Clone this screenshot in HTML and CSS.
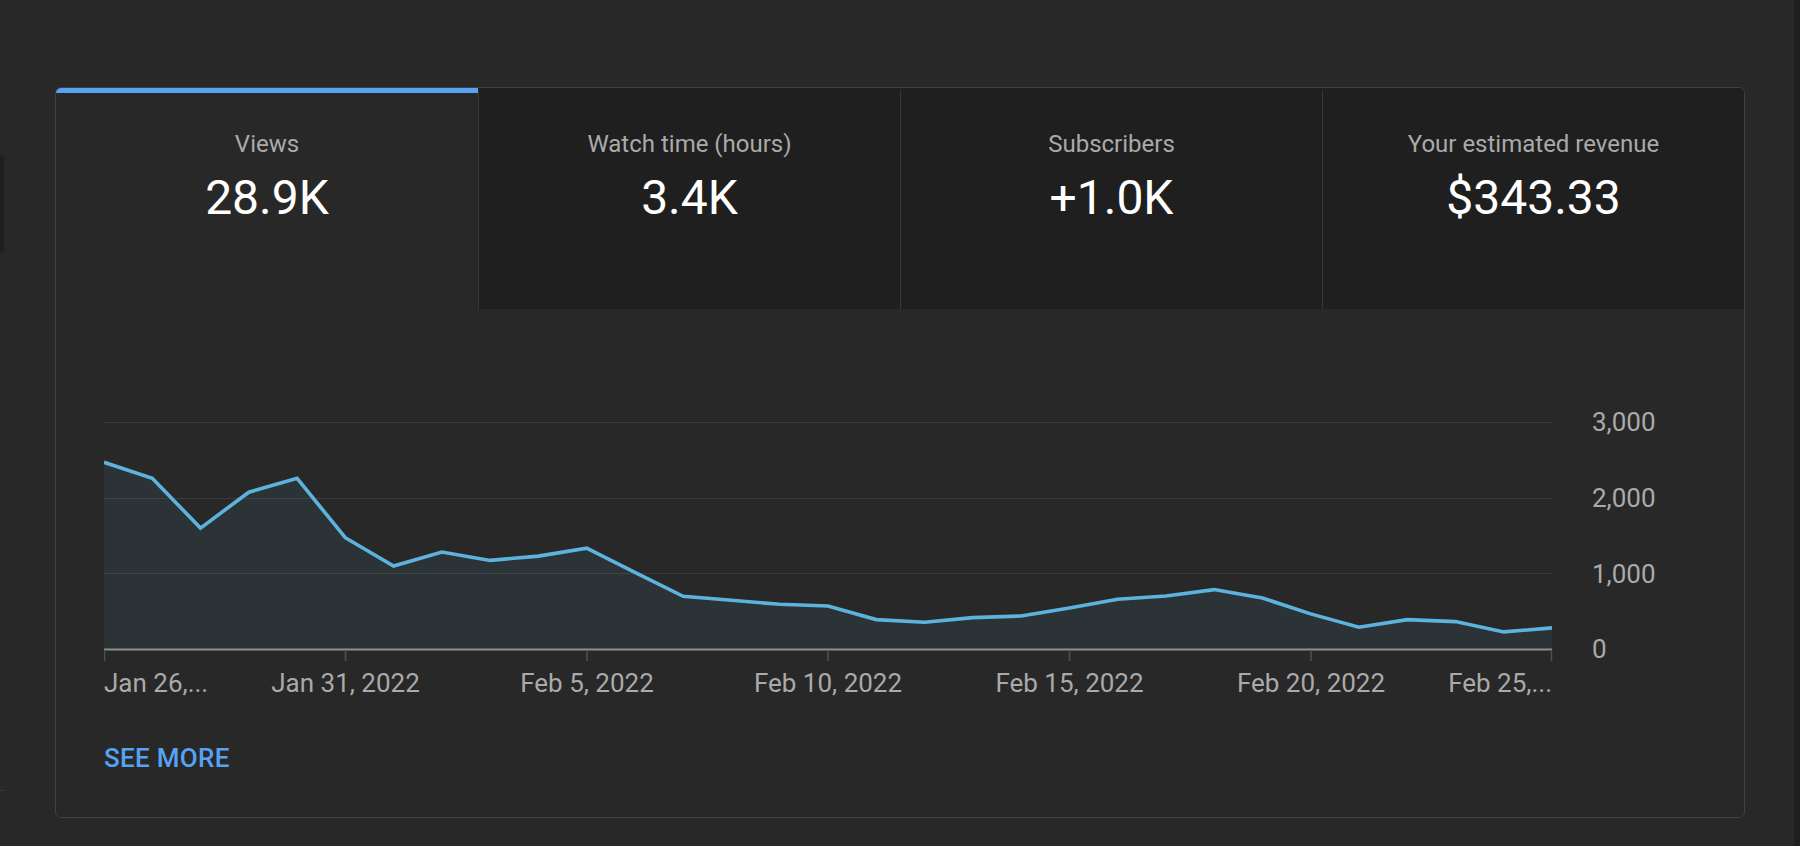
FILE: index.html
```html
<!DOCTYPE html>
<html lang="en">
<head>
    <meta charset="UTF-8">
    <meta name="viewport" content="width=device-width, initial-scale=1.0">
    <title>Channel analytics - Overview</title>
    <link rel="stylesheet" href="styles.css">
</head>
<body>
    <div class="page">
        <div class="side-edge">
            <div class="side-stub"></div>
            <div class="side-rule"></div>
        </div>

        <section class="overview-card">
            <div class="metric-tabs">
                <div class="metric-tab active">
                    <div class="metric-label">Views</div>
                    <div class="metric-value">28.9K</div>
                </div>
                <div class="metric-tab">
                    <div class="metric-label">Watch time (hours)</div>
                    <div class="metric-value">3.4K</div>
                </div>
                <div class="metric-tab">
                    <div class="metric-label">Subscribers</div>
                    <div class="metric-value">+1.0K</div>
                </div>
                <div class="metric-tab">
                    <div class="metric-label">Your estimated revenue</div>
                    <div class="metric-value">$343.33</div>
                </div>
            </div>

            <div class="chart-area">
                <svg class="chart" width="1596" height="310" viewBox="0 0 1596 310">
                    <!-- grid -->
                    <g class="grid-lines">
                        <line x1="0" y1="22.5" x2="1448" y2="22.5"></line>
                        <line x1="0" y1="98.5" x2="1448" y2="98.5"></line>
                        <line x1="0" y1="173.5" x2="1448" y2="173.5"></line>
                    </g>

                    <polygon id="area" class="area"></polygon>

                    <line class="baseline" x1="0" y1="249.5" x2="1448" y2="249.5"></line>
                    <g class="ticks">
                        <line x1="0.5" y1="250" x2="0.5" y2="261"></line>
                        <line x1="241.5" y1="250" x2="241.5" y2="261"></line>
                        <line x1="483" y1="250" x2="483" y2="261"></line>
                        <line x1="724" y1="250" x2="724" y2="261"></line>
                        <line x1="965.5" y1="250" x2="965.5" y2="261"></line>
                        <line x1="1207" y1="250" x2="1207" y2="261"></line>
                        <line x1="1447.5" y1="250" x2="1447.5" y2="261"></line>
                    </g>

                    <polyline id="line" class="line"></polyline>

                    <!-- y axis -->
                    <g class="axis-label">
                        <text x="1488" y="31">3,000</text>
                        <text x="1488" y="107">2,000</text>
                        <text x="1488" y="182.5">1,000</text>
                        <text x="1488" y="258">0</text>
                    </g>

                    <!-- x axis -->
                    <g class="axis-label">
                        <text x="0" y="292">Jan 26,...</text>
                        <text x="241.5" y="292" text-anchor="middle">Jan 31, 2022</text>
                        <text x="483" y="292" text-anchor="middle">Feb 5, 2022</text>
                        <text x="724" y="292" text-anchor="middle">Feb 10, 2022</text>
                        <text x="965.5" y="292" text-anchor="middle">Feb 15, 2022</text>
                        <text x="1207" y="292" text-anchor="middle">Feb 20, 2022</text>
                        <text x="1448" y="292" text-anchor="end">Feb 25,...</text>
                    </g>
                </svg>

                <a class="see-more" href="#">SEE MORE</a>
            </div>
        </section>

        <div class="scroll-edge"></div>
    </div>

    <script>
        // Daily views, Jan 26 - Feb 25
        const views = [
            2474, 2263, 1604, 2079, 2263, 1477, 1103, 1287, 1178, 1234,
            1340, 1020, 703, 650, 597, 575, 395, 360, 422, 443,
            549, 663, 707, 791, 680, 470, 295, 395, 369, 232, 285
        ];

        const plotWidth = 1448;
        const baseY = 249.5;
        const topY = 22.5; // 3,000 line
        const maxValue = 3000;
        const step = plotWidth / (views.length - 1);

        const points = views.map((v, i) => {
            const x = (i * step).toFixed(1);
            const y = (baseY - v / maxValue * (baseY - topY)).toFixed(1);
            return x + ',' + y;
        }).join(' ');

        document.getElementById('line').setAttribute('points', points);
        document.getElementById('area').setAttribute('points', `0,${baseY} ${points} ${plotWidth},${baseY}`);
    </script>
</body>
</html>
```

FILE: styles.css
```css
body {
    margin: 0;
    background: #282828;
    font-family: Roboto, "Noto Sans", Arial, sans-serif;
    color: #fff;
    overflow: hidden;
}

.page {
    display: grid;
    grid-template-columns: 4px 51px 1690px 49px 6px;
    height: 846px;
}

/* bits of the neighbouring panels */
.side-edge {
    grid-column: 1;
}

.side-stub {
    margin-top: 156px;
    height: 96px;
    background: #1f1f1f;
}

.side-rule {
    margin-top: 538px;
    height: 1px;
    background: #3a3a3a;
}

.scroll-edge {
    grid-column: 5;
    background: #1f1f1f;
}

.overview-card {
    grid-column: 3;
    align-self: start;
    margin-top: 87px;
    border: 1px solid #3f3f3f;
    border-radius: 6px;
    overflow: hidden;
    background: #282828;
}

.metric-tabs {
    display: grid;
    grid-template-columns: repeat(4, 1fr);
}

.metric-tab {
    height: 221px;
    box-sizing: border-box;
    padding-top: 37px;
    border-top: 5px solid transparent;
    border-left: 1px solid #383838;
    background: #1f1f1f;
    text-align: center;
}

.metric-tab.active {
    background: #282828;
    border-left: none;
    border-top-color: #56a3f3;
}

.metric-label {
    font-size: 24px;
    line-height: 28px;
    color: #aaaaaa;
}

.metric-value {
    margin-top: 12px;
    font-size: 48px;
    line-height: 56px;
    color: #ffffff;
}

.chart-area {
    padding: 91px 0 44px 48px;
}

.chart {
    display: block;
}

.grid-lines line {
    stroke: #3a3a3a;
    stroke-width: 1;
}

.area {
    fill: #5cb3dd;
    fill-opacity: 0.085;
}

.baseline {
    stroke: #8e8e8e;
    stroke-width: 2;
}

.ticks line {
    stroke: #505050;
    stroke-width: 1.5;
}

.line {
    fill: none;
    stroke: #5cb3dd;
    stroke-width: 3.6;
}

.axis-label text {
    fill: #aaaaaa;
    font-family: Roboto, "Noto Sans", Arial, sans-serif;
    font-size: 26px;
}

.see-more {
    display: block;
    width: max-content;
    margin-top: 33px;
    font-size: 26px;
    line-height: 30px;
    font-weight: 500;
    letter-spacing: 0.3px;
    color: #56a3f3;
    text-decoration: none;
}
```
